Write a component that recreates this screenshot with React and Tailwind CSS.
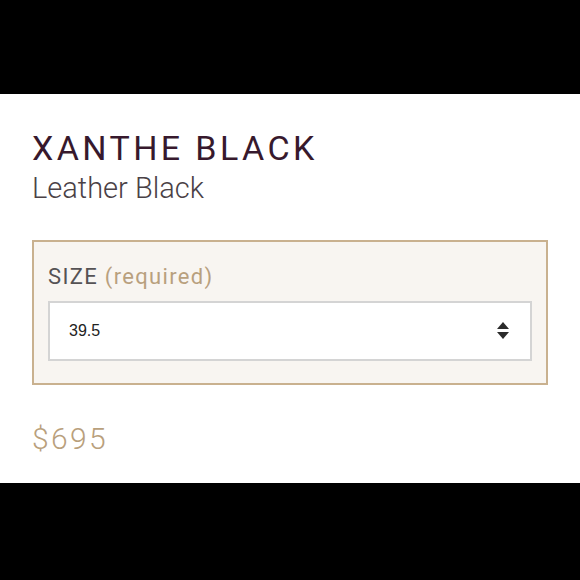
import React from "react";

const SortIcon = () => (
  <svg width="14" height="18" viewBox="0 0 14 18" fill="#2b2b2b">
    <path d="M7 0 L13 7 L1 7 Z" />
    <path d="M1 10 L13 10 L7 17 Z" />
  </svg>
);

const App = () => {
  return (
    <div className="w-[580px] h-[580px] flex flex-col bg-black font-['Roboto',sans-serif]">
      <div className="h-[94px] bg-black" />
      <div className="h-[389px] bg-white px-8 pt-[34px]">
        <h1 className="text-[34px] leading-[40px] font-normal tracking-[0.1em] text-[#37192d]">
          XANTHE BLACK
        </h1>
        <div className="text-[29px] leading-[36px] font-light text-[#4a4146] mt-[2px]">
          Leather Black
        </div>
        <div className="mt-[34px] h-[145px] border-2 border-[#c9b18f] bg-[#f8f5f1] px-[14px] pt-[20px]">
          <div className="text-[22px] leading-[30px] tracking-[0.06em] text-[#555254]">
            SIZE <span className="text-[#b8a07e]">(required)</span>
          </div>
          <div className="mt-[9px] h-[60px] border-2 border-[#d4d4d4] bg-white flex items-center justify-between pl-[19px] pr-[20px]">
            <span className="text-[16px] text-[#222] font-['Liberation_Sans',sans-serif]">39.5</span>
            <SortIcon />
          </div>
        </div>
        <div className="mt-[36px] text-[30px] leading-[36px] font-light tracking-[0.08em] text-[#b9a07c]">
          $695
        </div>
      </div>
      <div className="flex-1 bg-black" />
    </div>
  );
};

export default App;
